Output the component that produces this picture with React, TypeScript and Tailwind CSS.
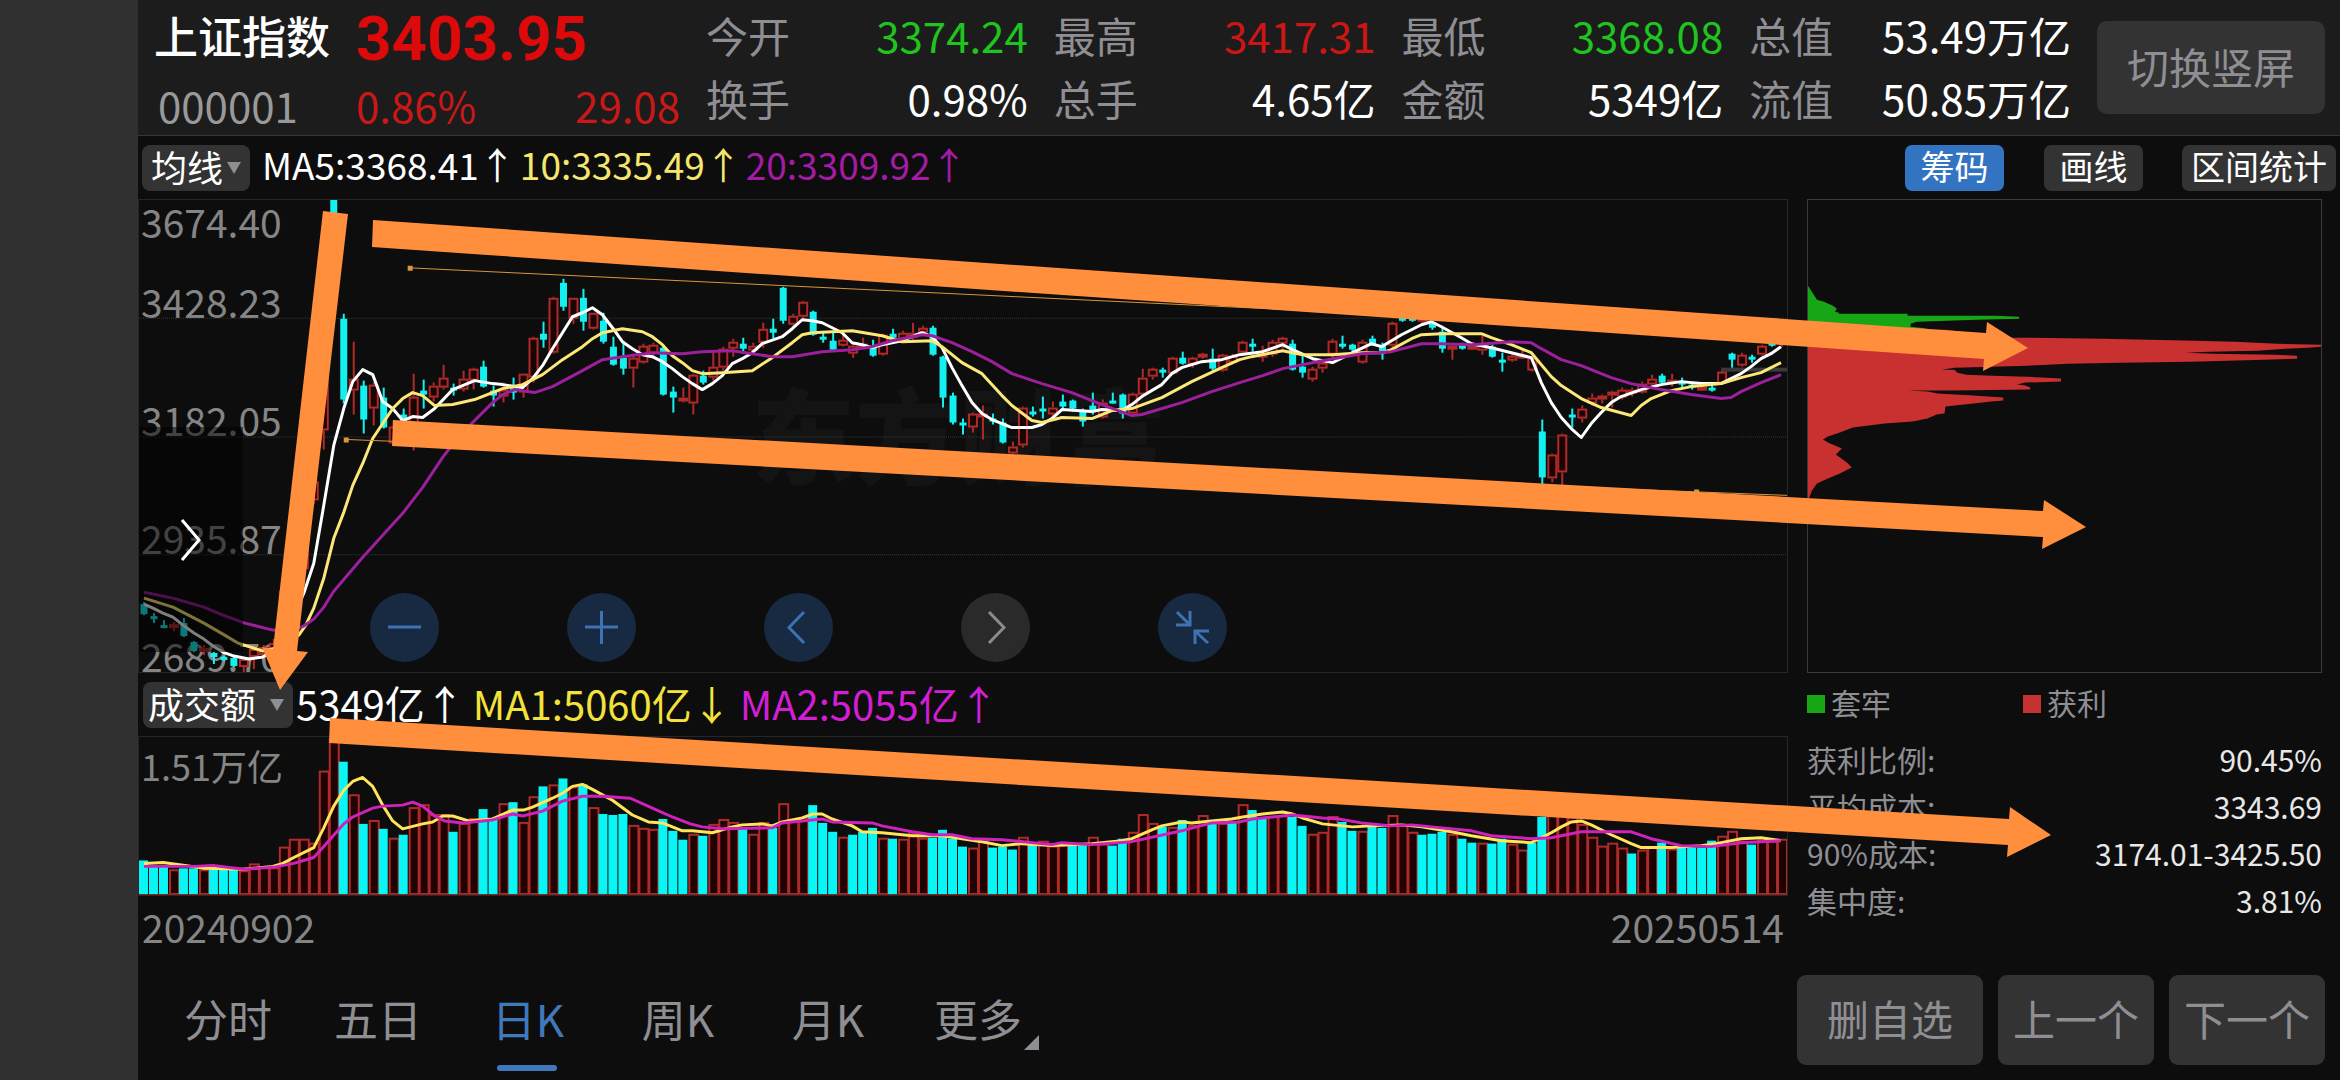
import React, { useMemo, useState } from "react";

type Candle = { up: boolean; high: number; top: number; bottom: number; low: number };
type Volume = { up: boolean; height: number };

const STEP = 10;

// each entry: r (up) or c (down), then high, body top, body bottom, low
const CANDLES = `
c403,405,415,416 c414,417,420,424 c421,426,429,429 r423,425,428,432 c419,424,437,438
c442,443,452,453 r446,449,453,456 c453,454,458,465 c457,458,461,462 c458,459,467,468
r459,460,468,473 r448,450,458,470 r446,448,456,458 r440,444,452,455 r390,392,430,436
r370,372,384,386 r322,324,370,372 r280,282,301,305 r160,162,231,250 c0,0,70,90
c114,119,200,204 r142,179,191,215 c181,186,220,234 r183,185,209,226 c188,198,228,229
r221,227,244,246 c209,215,232,240 r174,197,239,251 c180,191,195,209 r183,186,198,202
r165,178,188,190 c184,188,191,196 r171,179,190,192 r168,169,181,190 c161,167,187,188
c186,191,196,207 r183,190,197,203 c178,188,193,200 r174,174,193,198 r137,138,178,183
c122,134,140,148 r97,98,153,154 c79,83,107,111 r98,98,119,124 c89,98,122,131
r113,113,129,130 c113,121,142,144 c137,147,165,166 c141,158,169,175 r154,158,169,188
r144,146,163,164 r143,145,154,156 c145,148,195,196 c187,192,198,213 r188,198,202,203
r174,175,204,215 c171,176,183,185 r153,167,178,181 r147,149,168,171 r139,142,149,157
c138,144,149,154 r143,146,151,154 r123,129,143,148 c119,129,133,139 c87,88,121,124
r114,116,125,126 r101,102,117,119 c111,112,135,136 c133,137,139,143 c133,141,150,150
r134,140,146,147 r144,146,154,158 r138,144,148,149 c140,147,156,157 r134,135,155,156
c129,134,138,140 r131,133,140,141 r123,133,138,140 r126,128,133,134 c126,128,155,156
c156,157,198,208 c193,196,223,225 c219,223,226,235 r213,214,228,233 r206,214,218,240
c214,219,222,225 c219,223,243,244 r242,247,254,258 r207,208,246,248 c207,212,214,217
c197,209,211,219 r202,208,215,221 c195,202,207,209 c200,201,209,212 c209,212,222,227
c193,206,211,215 r200,203,218,219 c193,201,204,204 c194,195,214,219 r193,194,214,216
r169,178,195,198 r168,169,177,180 c168,170,172,178 r157,158,174,174 c152,158,164,165
r157,158,165,168 r153,154,156,159 c149,159,169,171 r154,155,171,172 r154,156,163,164
r141,142,153,155 c139,144,147,152 r146,154,157,162 r140,142,155,157 r137,138,144,149
c140,144,170,171 c154,167,173,178 r167,169,180,182 r160,163,169,173 r139,141,155,158
c136,144,147,149 c144,145,150,153 r140,142,163,164 c136,139,144,146 c143,145,154,160
r122,123,146,148 c114,116,121,122 c112,114,121,122 r108,112,122,124 c122,123,128,130
c128,132,149,153 r145,146,149,160 c143,145,149,150 r143,146,149,150 r136,144,151,155
c145,147,157,158 c153,160,163,172 r154,156,161,162 r151,155,158,159 r158,158,171,172
c220,232,278,285 r254,255,279,283 r234,235,273,287 c209,215,218,228 r206,209,219,223
r194,198,204,206 r195,196,200,204 r191,192,196,208 r188,190,198,200 r188,190,194,197
r182,184,193,194 r175,179,185,188 c174,176,183,184 r174,180,183,187 c178,182,185,188
c183,185,188,190 r184,187,190,191 c185,188,191,192 r171,172,184,184 c153,154,160,168
r153,155,166,167 c155,157,160,163 r145,146,155,156 c142,143,146,147 r132,134,145,147`;

const VOLUMES = `
c33 c27 c27 r25 c25 c25 r25 c24 c24 c24 r24 r31 r28 r27 r48 r56 r56 r52 r125 r158
c133 r101 c70 r75 c65 r57 c59 r88 r91 r81 r81 c62 r72 r77 c85 c74 r92 c92 r73 r99
c108 r111 c116 r109 c110 r88 c80 c79 c80 r70 r67 r66 c75 c63 c54 r61 c58 r71 r76 r73
c66 r61 r73 c66 r92 r76 r78 c89 c71 c62 r58 c59 c62 c66 r57 c55 r56 r63 r57 c56
c64 c55 c47 r47 r54 c46 c47 c44 r58 c49 r54 r49 r50 c49 c48 r58 r51 c48 c55 r63
r81 r72 c67 r68 c74 r70 r80 c70 r72 c72 r91 c84 c77 r79 r80 c77 c68 r61 r63 r79
c72 c63 r64 c67 c66 r80 r70 r63 c59 c60 c62 r61 c55 c51 r52 c50 c55 r51 r45 c51
c77 r82 r80 r78 r71 r58 r49 r52 r47 c40 r45 r48 c51 r46 c47 c46 c46 c53 r59 r64
r54 c49 r55 r54 r56`;

const MA5 =
  "5,405 14,409 24,414 34,418 44,426 55,434 65,440 74,447 84,453 95,457 110,460 124,458 135,451 146,438 156,414 165,394 175,364 185,306 195,246 205,209 214,182 224,170 234,175 244,202 254,209 264,221 274,217 284,218 296,209 314,190 324,186 336,181 354,184 364,185 384,188 394,179 404,166 414,149 424,133 434,117 444,113 454,108 464,115 474,128 484,142 494,149 504,155 514,157 524,162 534,169 544,177 554,184 564,190 574,184 584,176 594,164 604,159 614,153 624,144 644,137 654,129 664,120 674,121 684,123 694,128 704,133 714,143 724,145 734,148 744,145 764,141 784,133 794,137 804,148 814,168 824,186 834,203 844,214 854,220 864,224 874,228 894,228 904,225 914,219 924,210 954,212 964,210 984,211 994,205 1004,197 1024,185 1034,174 1044,168 1064,162 1084,160 1102,155 1125,152 1145,145 1155,150 1175,159 1195,163 1215,153 1234,144 1244,147 1264,135 1284,125 1294,122 1304,127 1324,138 1334,144 1354,148 1374,153 1394,158 1404,183 1414,203 1424,218 1434,229 1444,238 1454,224 1464,213 1474,203 1484,197 1504,190 1524,185 1544,182 1564,184 1584,184 1594,179 1604,174 1614,167 1624,159 1634,154 1644,147";
const MA10 =
  "5,399 34,408 65,424 84,435 99,444 124,452 142,448 160,436 167,426 175,409 185,379 195,339 205,313 214,286 224,264 234,239 244,224 254,209 264,199 274,193 284,196 296,206 314,205 336,200 364,189 384,185 404,175 424,160 444,147 454,139 464,133 484,129 504,132 514,137 524,145 534,156 544,163 554,171 564,174 584,173 614,171 634,158 654,143 664,135 674,133 714,131 744,136 764,142 794,141 804,147 824,163 844,174 864,196 874,206 894,221 904,223 924,218 954,219 974,211 994,209 1024,198 1054,182 1084,168 1102,160 1114,157 1145,151 1165,155 1195,155 1224,153 1244,153 1254,150 1274,139 1284,135 1304,134 1344,134 1354,138 1374,145 1394,153 1414,177 1424,186 1444,199 1464,208 1494,216 1504,206 1514,199 1534,191 1554,187 1584,184 1604,178 1624,173 1644,163";
const MA20 =
  "5,393 34,399 65,408 84,416 106,424 134,431 149,432 165,427 175,420 185,408 195,392 224,358 264,314 284,288 304,258 314,245 334,223 354,203 364,195 376,190 396,193 414,187 444,171 464,160 484,157 514,153 544,154 564,152 594,151 614,154 634,157 654,157 684,152 714,150 734,147 754,141 784,135 794,136 814,143 834,152 854,162 874,174 904,184 934,193 964,205 994,216 1004,215 1044,203 1074,192 1102,183 1125,176 1145,169 1185,161 1224,154 1254,152 1284,144 1304,144 1334,145 1374,142 1394,143 1404,149 1424,160 1444,166 1474,178 1494,184 1524,190 1554,195 1584,199 1594,198 1604,192 1624,183 1644,175";
const VOL_MA1 =
  "5,128 24,127 46,130 65,133 104,134 134,131 144,128 155,122 175,112 185,92 195,70 205,54 214,45 224,41 234,50 244,69 254,85 264,93 284,88 294,86 304,80 314,80 330,85 354,83 374,74 385,74 394,71 414,62 424,57 434,50 444,48 454,53 474,64 494,79 510,86 524,87 544,95 554,95 574,97 594,91 604,89 624,88 634,90 644,86 664,82 674,78 684,78 694,83 714,90 724,96 744,97 774,100 804,100 824,103 844,106 864,110 884,108 914,110 954,108 984,105 994,103 1014,94 1024,90 1044,86 1054,87 1074,85 1094,83 1105,81 1125,78 1145,76 1155,78 1165,82 1185,88 1215,91 1234,90 1264,89 1284,91 1314,96 1334,100 1364,105 1394,107 1404,102 1414,97 1424,91 1434,86 1444,85 1454,89 1474,99 1494,108 1504,112 1534,112 1564,110 1579,108 1604,103 1624,102 1644,105";
const VOL_MA2 =
  "5,131 55,131 74,130 104,134 134,132 155,128 175,122 185,111 205,88 214,81 234,72 244,70 264,69 274,66 284,70 296,80 306,85 324,87 354,84 374,78 384,80 404,75 424,65 444,60 464,60 492,62 514,72 534,81 552,88 564,91 584,93 634,92 644,87 664,85 684,83 694,86 734,87 744,90 774,96 794,99 814,99 834,103 864,104 914,109 924,107 954,109 994,106 1044,95 1074,87 1102,86 1115,83 1155,79 1185,82 1201,83 1224,87 1254,90 1274,89 1294,91 1334,95 1354,100 1394,103 1414,102 1444,96 1494,96 1514,103 1544,110 1574,111 1604,107 1644,105";

const CHIP_LOCKED =
  "0,86 9,100 16,102 25,106 29,109 27,112 31,113 31,114 100,114 100,116 189,116 212,117 212,119 170,120 109,122 103,124 103,127 113,128 125,130 0,130";
const CHIP_PROFIT =
  "0,130 138,130 202,138 224,138 297,139 388,141 429,142 471,144 515,145 515,147 501,148 479,149 451,151 402,152 379,153 406,154 469,155 491,156 491,159 458,160 384,162 314,163 261,164 221,166 147,168 134,170 147,170 150,173 159,175 185,176 220,177 254,179 254,182 218,183 210,185 218,186 223,188 223,190 145,191 100,191 120,192 130,194 166,196 196,198 196,201 184,202 166,204 138,207 137,214 129,215 120,219 105,222 77,224 45,228 32,233 20,237 15,240 20,243 34,249 28,255 39,263 44,268 32,274 20,279 9,284 4,291 1,299 0,299";

const ARROWS = [
  "373,220 1986,333 1987,322 2028,348 1983,371 1984,359 372,247",
  "393,420 2043,511 2044,500 2086,527 2042,549 2043,537 392,446",
  "323,211 348,214 297,651 308,652 280,690 262,647 273,649",
  "330,718 2009,819 2010,807 2051,835 2007,857 2008,845 329,743",
];

const QUOTES = [
  { label: "今开", value: "3374.24", color: "text-[#1fc41f]" },
  { label: "最高", value: "3417.31", color: "text-[#cc1616]" },
  { label: "最低", value: "3368.08", color: "text-[#1fc41f]" },
  { label: "总值", value: "53.49万亿", color: "text-white" },
  { label: "换手", value: "0.98%", color: "text-white" },
  { label: "总手", value: "4.65亿", color: "text-white" },
  { label: "金额", value: "5349亿", color: "text-white" },
  { label: "流值", value: "50.85万亿", color: "text-white" },
];

const CHIP_STATS = [
  { label: "获利比例:", value: "90.45%" },
  { label: "平均成本:", value: "3343.69" },
  { label: "90%成本:", value: "3174.01-3425.50" },
  { label: "集中度:", value: "3.81%" },
];

const PERIODS = ["分时", "五日", "日K", "周K", "月K", "更多"];

const parseCandles = (data: string): Candle[] =>
  data
    .trim()
    .split(/\s+/)
    .map((entry) => {
      const [high, top, bottom, low] = entry.slice(1).split(",").map(Number);
      return { up: entry[0] === "r", high, top, bottom, low };
    });

const parseVolumes = (data: string): Volume[] =>
  data
    .trim()
    .split(/\s+/)
    .map((entry) => ({ up: entry[0] === "r", height: Number(entry.slice(1)) }));

const Header: React.FC = () => (
  <header className="flex h-[136px] border-b border-[#363636] bg-[#1c1c1c] text-[42px] leading-none">
    <div className="grid grid-cols-[202px_324px] auto-rows-[70px] items-center pl-4">
      <h1 className="text-[44px] font-medium text-white">上证指数</h1>
      <p className="pt-2 font-['Roboto',sans-serif] text-[62px] font-bold text-[#dc0a0a]">3403.95</p>
      <p className="pl-1 text-[#999999]">000001</p>
      <p className="flex justify-between text-[#c81818]">
        <span>0.86%</span>
        <span>29.08</span>
      </p>
    </div>
    <dl className="ml-[26px] grid flex-1 grid-cols-4 auto-rows-[63px] items-center gap-x-[26px] pt-[3px]">
      {QUOTES.map((quote) => (
        <div key={quote.label} className="flex justify-between whitespace-nowrap">
          <dt className="text-[#8e8e93]">{quote.label}</dt>
          <dd className={quote.color}>{quote.value}</dd>
        </div>
      ))}
    </dl>
    <button className="mt-[21px] mr-[15px] ml-[26px] h-[93px] w-[228px] rounded-[10px] bg-[#333333] pb-1 text-[#8e8e93]">
      切换竖屏
    </button>
  </header>
);

type PickerProps = { label: string; options: string[]; className: string };

const Picker: React.FC<PickerProps> = ({ label, options, className }) => (
  <div className="relative">
    <select
      aria-label={label}
      className={`h-[46px] appearance-none rounded-[8px] bg-[#333333] pb-1 text-[36px] leading-[42px] text-white outline-none ${className}`}
    >
      {options.map((option) => (
        <option key={option}>{option}</option>
      ))}
    </select>
    <svg
      className="pointer-events-none absolute top-[17px] right-[9px] h-3 w-[14px] fill-[#8e8e93]"
      viewBox="0 0 14 12"
    >
      <path d="M0 0h14L7 12z" />
    </svg>
  </div>
);

const Toolbar: React.FC = () => (
  <div className="flex h-[63px] items-center pl-1 text-[37px] leading-none">
    <Picker label="主图指标" options={["均线", "BOLL"]} className="w-[108px] pl-[9px]" />
    <p className="flex flex-1 gap-1 pb-[6px] pl-3">
      <span className="text-white">MA5:3368.41↑</span>
      <span className="text-[#f5e66e]">10:3335.49↑</span>
      <span className="text-[#a61ba6]">20:3309.92↑</span>
    </p>
    <div className="flex pr-1 text-[34px] text-white">
      <button className="mr-10 h-[46px] w-[99px] rounded-[7px] bg-[#3374c2] pb-1">筹码</button>
      <button className="mr-[39px] h-[46px] w-[99px] rounded-[7px] bg-[#333333] pb-1">画线</button>
      <button className="h-[46px] w-[154px] rounded-[7px] bg-[#333333] pb-1 whitespace-nowrap">
        区间统计
      </button>
    </div>
  </div>
);

const ChartControls: React.FC = () => {
  const blue = "flex size-[69px] items-center justify-center rounded-full bg-[#182a42] text-[#3d72b4]";
  const gray = "flex size-[69px] items-center justify-center rounded-full bg-[#2a2a2a] text-[#8c8c8c]";
  const controls = [
    { name: "缩小", style: blue, path: "M4 20H37" },
    { name: "放大", style: blue, path: "M4 20H37M20.5 4V37" },
    { name: "左移", style: blue, path: "M26 5L11 20.5L26 36" },
    { name: "右移", style: gray, path: "M14 5L29 20.5L14 36" },
    { name: "收起", style: blue, path: "M4 18H18V4M5 5L18 18M37 24H23V37M36 36L23 24" },
  ];

  return (
    <div className="absolute bottom-[10px] left-[231px] flex gap-32">
      {controls.map((control) => (
        <button key={control.name} aria-label={control.name} className={control.style}>
          <svg className="size-[41px]" viewBox="0 0 41 41" fill="none" stroke="currentColor" strokeWidth="3">
            <path d={control.path} />
          </svg>
        </button>
      ))}
    </div>
  );
};

const CandleChart: React.FC = () => {
  const candles = useMemo(() => parseCandles(CANDLES), []);

  return (
    <section className="relative h-[474px] border border-[#262626]">
      <p className="absolute inset-x-0 top-[180px] pr-2 text-center text-[104px] leading-none font-black text-[#141414]">
        东方财富
      </p>
      <div className="absolute inset-0 grid grid-rows-4 pl-[2px] text-[39px] leading-[34px] text-[#858585]">
        <div className="flex flex-col justify-between pt-1">
          <span>3674.40</span>
          <span>3428.23</span>
        </div>
        <span className="self-end">3182.05</span>
        <span className="self-end">2935.87</span>
        <span className="self-end">2689.70</span>
      </div>
      <svg
        className="absolute inset-0 h-full w-full"
        viewBox="0 0 1650 473"
        preserveAspectRatio="none"
        fill="none"
      >
        {[118, 237, 355].map((y) => (
          <line key={y} x1="0" x2="1650" y1={y + 0.5} y2={y + 0.5} stroke="#3a3a3a" strokeDasharray="1 1" />
        ))}
        <rect x="1584" y="168" width="66" height="4" fill="#3a3a3a" />
        {candles.map((candle, i) => {
          const x = i * STEP + 5;
          const height = Math.max(candle.bottom - candle.top, 3);
          if (!candle.up) {
            return (
              <g key={i} fill="#14f0f0">
                <rect x={x - 1} y={candle.high} width="2" height={candle.low - candle.high} />
                <rect x={x - 3.5} y={candle.top} width="7" height={height} />
              </g>
            );
          }
          return (
            <g key={i} stroke="#b02a2a" strokeWidth="2">
              <path d={`M${x} ${candle.high}V${candle.top}M${x} ${candle.bottom}V${candle.low}`} />
              <rect x={x - 4} y={candle.top + 1} width="8" height={Math.max(height - 2, 2)} fill="#1a0404" />
            </g>
          );
        })}
        <g strokeWidth="3" strokeLinejoin="round">
          <polyline points={MA5} stroke="#ffffff" />
          <polyline points={MA10} stroke="#fbe878" />
          <polyline points={MA20} stroke="#9c1f9c" />
        </g>
        <g stroke="#d9963c" fill="#d9963c">
          <path d="M271 68L1300 117M208 240L1650 296" />
          <path d="M269 66h5v5h-5zM205 238h5v5h-5zM1557 290h5v5h-5z" stroke="none" />
        </g>
      </svg>
      <button
        aria-label="展开"
        className="absolute top-[227px] left-0 flex h-[225px] w-[104px] items-center justify-center bg-black/50"
      >
        <svg className="h-11 w-6" viewBox="0 0 24 44" fill="none" stroke="#ffffff" strokeWidth="3">
          <path d="M3 2L20 22L3 42" />
        </svg>
      </button>
      <ChartControls />
    </section>
  );
};

const VolumeChart: React.FC = () => {
  const volumes = useMemo(() => parseVolumes(VOLUMES), []);

  return (
    <section>
      <div className="flex h-[63px] items-center pl-[5px] text-[40px] leading-none">
        <Picker label="副图指标" options={["成交额", "成交量"]} className="w-[150px] pl-[5px]" />
        <p className="flex gap-2 pb-1 pl-[3px] whitespace-nowrap">
          <span className="text-white">5349亿↑</span>
          <span className="text-[#f2e23c]">MA1:5060亿↓</span>
          <span className="text-[#d41ed4]">MA2:5055亿↑</span>
        </p>
      </div>
      <div className="relative h-40 border border-[#262626]">
        <span className="absolute top-[10px] left-[2px] text-[36px] leading-none text-[#858585]">
          1.51万亿
        </span>
        <svg
          className="absolute inset-0 h-full w-full"
          viewBox="0 0 1650 160"
          preserveAspectRatio="none"
          fill="none"
        >
          {volumes.map((volume, i) =>
            volume.up ? (
              <rect
                key={i}
                x={i * STEP + 1}
                y={160 - volume.height}
                width="9"
                height={volume.height - 1}
                fill="#1f0202"
                stroke="#ac2c2c"
                strokeWidth="2"
              />
            ) : (
              <rect key={i} x={i * STEP} y={158 - volume.height} width="9" height={volume.height + 1} fill="#08f6f6" />
            )
          )}
          <path d="M0 159.5H1650" stroke="#8a2424" />
          <g strokeWidth="3" strokeLinejoin="round">
            <polyline points={VOL_MA1} stroke="#ffe45c" />
            <polyline points={VOL_MA2} stroke="#cf22bd" />
          </g>
        </svg>
      </div>
      <div className="flex h-16 items-center justify-between px-1 pb-1 text-[39px] leading-none text-[#858585]">
        <time>20240902</time>
        <time>20250514</time>
      </div>
    </section>
  );
};

const ChipPanel: React.FC = () => (
  <aside className="mr-[18px] ml-[19px] w-[515px] text-[30px] leading-none">
    <div className="h-[474px] border border-[#3a3a3a]">
      <svg className="h-full w-full" viewBox="0 0 515 473" preserveAspectRatio="none">
        <polygon points={CHIP_LOCKED} fill="#16a616" />
        <polygon points={CHIP_PROFIT} fill="#c93030" />
      </svg>
    </div>
    <div className="grid h-[62px] grid-cols-[216px_1fr] items-center text-[#8e8e93]">
      <span className="flex items-center gap-[6px]">
        <i className="size-[18px] bg-[#16a616]" />
        <span className="pb-1">套牢</span>
      </span>
      <span className="flex items-center gap-[6px]">
        <i className="size-[18px] bg-[#c93030]" />
        <span className="pb-1">获利</span>
      </span>
    </div>
    <dl>
      {CHIP_STATS.map((stat) => (
        <div key={stat.label} className="flex h-[47px] items-center justify-between">
          <dt className="text-[#8e8e93]">{stat.label}</dt>
          <dd className="text-[#e8e8e8]">{stat.value}</dd>
        </div>
      ))}
    </dl>
  </aside>
);

const BottomBar: React.FC = () => {
  const [period, setPeriod] = useState<string>("日K");

  return (
    <footer className="flex h-[120px] items-center justify-between pr-[15px] pl-[15px] leading-none">
      <nav className="flex h-full text-[44px]">
        {PERIODS.map((item) => (
          <button
            key={item}
            onClick={() => setPeriod(item)}
            className={`relative w-[150px] pb-1 ${item === period ? "text-[#4078bc]" : "text-[#8e8e93]"}`}
          >
            {item}
            {item === period && (
              <span className="absolute bottom-[9px] left-[44px] h-[6px] w-[60px] rounded-[3px] bg-[#4078bc]" />
            )}
            {item === "更多" && (
              <svg className="absolute right-[14px] bottom-[30px] size-[15px] fill-[#8e8e93]" viewBox="0 0 15 15">
                <path d="M15 0V15H0z" />
              </svg>
            )}
          </button>
        ))}
      </nav>
      <div className="flex gap-[15px] text-[42px] text-[#8e8e93]">
        <button className="h-[90px] w-[186px] rounded-[9px] bg-[#333333] pb-1">删自选</button>
        <button className="h-[90px] w-[156px] rounded-[9px] bg-[#333333] pb-1">上一个</button>
        <button className="h-[90px] w-[156px] rounded-[9px] bg-[#333333] pb-1">下一个</button>
      </div>
    </footer>
  );
};

const App: React.FC = () => {
  return (
    <div className="relative flex min-h-screen bg-[#0d0d0d] font-['Noto_Sans_CJK_SC',sans-serif]">
      <div className="w-[138px] shrink-0 bg-[#303030]" />
      <main className="min-w-0 flex-1">
        <Header />
        <Toolbar />
        <div className="flex">
          <div className="min-w-0 flex-1">
            <CandleChart />
            <VolumeChart />
          </div>
          <ChipPanel />
        </div>
        <BottomBar />
      </main>
      {/* hand-drawn trend arrows lie over every panel */}
      <svg
        className="pointer-events-none absolute inset-0 h-full w-full"
        viewBox="0 0 2340 1080"
        preserveAspectRatio="none"
        fill="#ff8f3c"
      >
        {ARROWS.map((points) => (
          <polygon key={points} points={points} />
        ))}
      </svg>
    </div>
  );
};

export default App;
